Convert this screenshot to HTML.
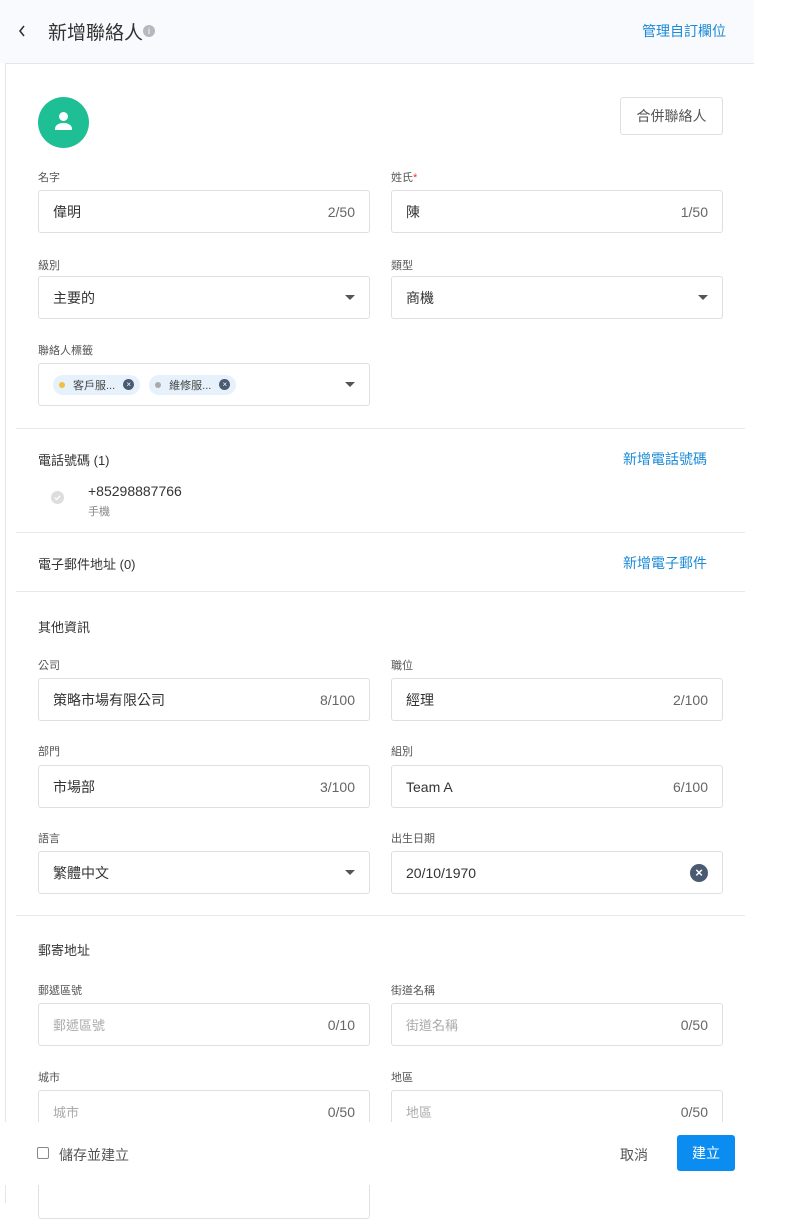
<!DOCTYPE html>
<html><head><meta charset="utf-8"><style>
*{box-sizing:border-box;margin:0;padding:0}
body{width:786px;height:1194px;overflow:hidden;background:#fff;font-family:"Liberation Sans","Noto Sans CJK TC",sans-serif;color:#333;position:relative}
.a{position:absolute}
.hdr{left:0;top:0;width:754px;height:63px;background:#f8fafd}
.card{left:5px;top:63px;width:749px;height:1140px;border-left:1px solid #e3e6ea;border-top:1px solid #e3e6ea;background:#fff}
.lbl{font-size:11px;color:#555}
.inp{border:1px solid #dcdfe4;border-radius:3px;height:43px;width:332px;font-size:14px;color:#333;display:flex;align-items:center;padding:0 14px;justify-content:space-between}
.cnt{color:#666;font-size:14px}
.ph{color:#aaa;font-size:13px}
.hr{left:16px;width:729px;height:1px;background:#e6e8eb}
.sec{font-size:13px;color:#333}
.link{color:#1b8ad6;font-size:14px}
.caret{width:0;height:0;border-left:5px solid transparent;border-right:5px solid transparent;border-top:5px solid #555}
.chip{display:inline-flex;align-items:center;background:#e6f1fb;border-radius:10px;height:20px;padding:0 6px;font-size:11px;color:#444;margin-right:9px}
.dot{width:6px;height:6px;border-radius:50%;margin-right:8px}
.x{width:11px;height:11px;border-radius:50%;background:#4a5a70;color:#fff;font-size:8px;line-height:11px;text-align:center;margin-left:8px}
</style></head><body>
<div class="a hdr"></div>
<svg class="a" style="left:17px;top:24px" width="10" height="14" viewBox="0 0 10 14"><path d="M7 2L3 7l4 5" fill="none" stroke="#333" stroke-width="1.6"/></svg>
<div class="a" style="left:48px;top:18px;font-size:19px;color:#333">新增聯絡人</div>
<div class="a" style="left:143px;top:25px;width:12px;height:12px;border-radius:50%;background:#b5b9bf;color:#fff;font-size:9px;text-align:center;line-height:12px">i</div>
<div class="a link" style="left:642px;top:21px">管理自訂欄位</div>
<div class="a card"></div>
<div class="a" style="left:38px;top:97px;width:51px;height:51px;border-radius:50%;background:#1fbf96">
<svg width="51" height="51" viewBox="0 0 51 51"><circle cx="25.5" cy="19.5" r="4.5" fill="#fff"/><path d="M17 32c0-4 4-6 8.5-6s8.5 2 8.5 6v1H17z" fill="#fff"/></svg></div>
<div class="a" style="left:620px;top:97px;width:103px;height:38px;border:1px solid #dcdfe4;border-radius:3px;font-size:14px;color:#555;display:flex;align-items:center;justify-content:center">合併聯絡人</div>

<div class="a lbl" style="left:38px;top:169px">名字</div>
<div class="a lbl" style="left:391px;top:169px">姓氏<span style="color:#e33">*</span></div>
<div class="a inp" style="left:38px;top:190px"><span>偉明</span><span class="cnt">2/50</span></div>
<div class="a inp" style="left:391px;top:190px"><span>陳</span><span class="cnt">1/50</span></div>

<div class="a lbl" style="left:38px;top:257px">級別</div>
<div class="a lbl" style="left:391px;top:257px">類型</div>
<div class="a inp" style="left:38px;top:276px"><span>主要的</span><span class="caret"></span></div>
<div class="a inp" style="left:391px;top:276px"><span>商機</span><span class="caret"></span></div>

<div class="a lbl" style="left:38px;top:342px">聯絡人標籤</div>
<div class="a inp" style="left:38px;top:363px;padding-left:14px"><span style="display:flex"><span class="chip"><span class="dot" style="background:#f0c040"></span>客戶服...<span class="x">×</span></span><span class="chip"><span class="dot" style="background:#aaa"></span>維修服...<span class="x">×</span></span></span><span class="caret"></span></div>

<div class="a hr" style="top:428px"></div>
<div class="a sec" style="left:38px;top:450px">電話號碼 (1)</div>
<div class="a link" style="left:623px;top:449px">新增電話號碼</div>
<svg class="a" style="left:51px;top:491px" width="13" height="13" viewBox="0 0 13 13"><circle cx="6.5" cy="6.5" r="6.5" fill="#ddd"/><path d="M3.8 6.6l1.8 1.8 3.6-3.6" fill="none" stroke="#fff" stroke-width="1.3"/></svg>
<div class="a" style="left:88px;top:483px;font-size:14px">+85298887766</div>
<div class="a" style="left:88px;top:503px;font-size:11px;color:#888">手機</div>
<div class="a hr" style="top:532px"></div>
<div class="a sec" style="left:38px;top:554px">電子郵件地址 (0)</div>
<div class="a link" style="left:623px;top:553px">新增電子郵件</div>
<div class="a hr" style="top:591px"></div>
<div class="a sec" style="left:38px;top:617px">其他資訊</div>

<div class="a lbl" style="left:38px;top:657px">公司</div>
<div class="a lbl" style="left:391px;top:657px">職位</div>
<div class="a inp" style="left:38px;top:678px"><span>策略市場有限公司</span><span class="cnt">8/100</span></div>
<div class="a inp" style="left:391px;top:678px"><span>經理</span><span class="cnt">2/100</span></div>
<div class="a lbl" style="left:38px;top:743px">部門</div>
<div class="a lbl" style="left:391px;top:743px">組別</div>
<div class="a inp" style="left:38px;top:765px"><span>市場部</span><span class="cnt">3/100</span></div>
<div class="a inp" style="left:391px;top:765px"><span>Team A</span><span class="cnt">6/100</span></div>
<div class="a lbl" style="left:38px;top:830px">語言</div>
<div class="a lbl" style="left:391px;top:830px">出生日期</div>
<div class="a inp" style="left:38px;top:851px"><span>繁體中文</span><span class="caret"></span></div>
<div class="a inp" style="left:391px;top:851px"><span>20/10/1970</span><span style="width:18px;height:18px;border-radius:50%;background:#4a5a70;color:#fff;font-size:13px;line-height:18px;text-align:center;font-weight:bold">×</span></div>
<div class="a hr" style="top:915px"></div>
<div class="a sec" style="left:38px;top:940px">郵寄地址</div>
<div class="a lbl" style="left:38px;top:982px">郵遞區號</div>
<div class="a lbl" style="left:391px;top:982px">街道名稱</div>
<div class="a inp" style="left:38px;top:1003px"><span class="ph">郵遞區號</span><span class="cnt">0/10</span></div>
<div class="a inp" style="left:391px;top:1003px"><span class="ph">街道名稱</span><span class="cnt">0/50</span></div>
<div class="a lbl" style="left:38px;top:1069px">城市</div>
<div class="a lbl" style="left:391px;top:1069px">地區</div>
<div class="a inp" style="left:38px;top:1090px"><span class="ph">城市</span><span class="cnt">0/50</span></div>
<div class="a inp" style="left:391px;top:1090px"><span class="ph">地區</span><span class="cnt">0/50</span></div>
<div class="a inp" style="left:38px;top:1176px"></div>

<div class="a" style="left:0;top:1122px;width:754px;height:63px;background:#fff"></div>
<div class="a" style="left:37px;top:1147px;width:12px;height:12px;border:1px solid #888;border-radius:2px"></div>
<div class="a" style="left:59px;top:1145px;font-size:14px;color:#555">儲存並建立</div>
<div class="a" style="left:620px;top:1145px;font-size:14px;color:#555">取消</div>
<div class="a" style="left:677px;top:1135px;width:58px;height:36px;background:#0a8cf0;border-radius:3px;color:#fff;font-size:14px;display:flex;align-items:center;justify-content:center">建立</div>
</body></html>
